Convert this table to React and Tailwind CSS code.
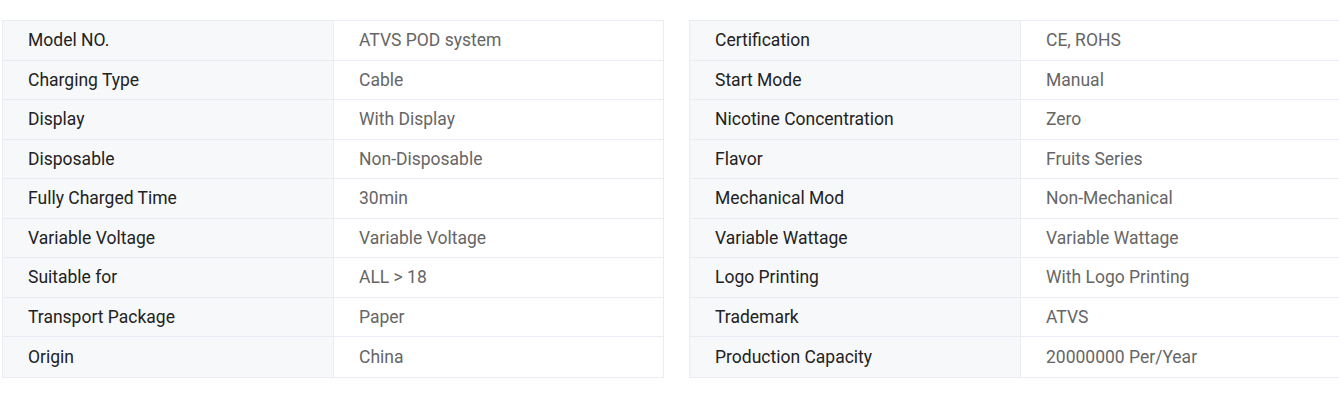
const left = [
  ["Model NO.", "ATVS POD system"],
  ["Charging Type", "Cable"],
  ["Display", "With Display"],
  ["Disposable", "Non-Disposable"],
  ["Fully Charged Time", "30min"],
  ["Variable Voltage", "Variable Voltage"],
  ["Suitable for", "ALL > 18"],
  ["Transport Package", "Paper"],
  ["Origin", "China"],
];

const right = [
  ["Certification", "CE, ROHS"],
  ["Start Mode", "Manual"],
  ["Nicotine Concentration", "Zero"],
  ["Flavor", "Fruits Series"],
  ["Mechanical Mod", "Non-Mechanical"],
  ["Variable Wattage", "Variable Wattage"],
  ["Logo Printing", "With Logo Printing"],
  ["Trademark", "ATVS"],
  ["Production Capacity", "20000000 Per/Year"],
];

function SpecTable({ rows }) {
  return (
    <div className="w-[662px] shrink-0 border border-[#e9edf3]">
      {rows.map(([label, value], i) => (
        <div
          key={label}
          className={`flex h-[39.5px] ${i < rows.length - 1 ? "border-b border-[#e9edf3]" : ""}`}
        >
          <div className="w-[331px] shrink-0 flex items-center pl-[25px] bg-[#f7f8fa] border-r border-[#e9edf3] text-[#222]">
            {label}
          </div>
          <div className="flex-1 flex items-center pl-[25px] text-[#666]">{value}</div>
        </div>
      ))}
    </div>
  );
}

export default function App() {
  return (
    <div className="w-[1339px] h-[397px] overflow-hidden bg-white" style={{ fontFamily: "Roboto, 'Liberation Sans', sans-serif" }}>
      <div className="flex gap-[25px] pl-[2px] pt-[20px] text-[17.5px]">
        <SpecTable rows={left} />
        <SpecTable rows={right} />
      </div>
    </div>
  );
}
